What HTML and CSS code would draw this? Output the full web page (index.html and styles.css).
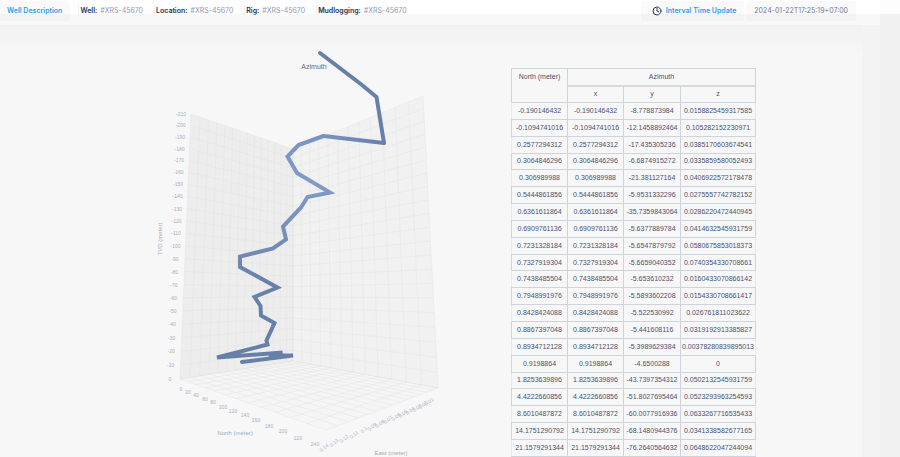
FILE: index.html
```html
<!DOCTYPE html>
<html lang="en">
<head>
<meta charset="utf-8">
<title>Well Description</title>
<link rel="stylesheet" href="styles.css">
</head>
<body>
<header class="topbar">
  <h1 class="chip title">Well Description</h1>
  <dl class="facts">
    <div class="fact"><dt>Well:</dt><dd>#XRS-45670</dd></div>
    <div class="fact"><dt>Location:</dt><dd>#XRS-45670</dd></div>
    <div class="fact"><dt>Rig:</dt><dd>#XRS-45670</dd></div>
    <div class="fact"><dt>Mudlogging:</dt><dd>#XRS-45670</dd></div>
  </dl>
  <div class="chip update">
    <svg class="clock" viewBox="0 0 10 10" aria-hidden="true"><circle cx="5" cy="5" r="4"/><path d="M5 2.4V5l1.8 1"/></svg>
    <span>Interval Time Update</span>
  </div>
  <time class="chip stamp">2024-01-22T17:25:19+07:00</time>
</header>
<div class="page">
<main class="content">
  <svg class="chart" viewBox="0 25 500 432" role="img" aria-label="Azimuth">
    <defs>
      <linearGradient id="across" gradientUnits="userSpaceOnUse" x1="384" y1="0" x2="323" y2="0"><stop offset="0" stop-color="#6680aa"/><stop offset="1" stop-color="#7894c0"/></linearGradient>
      <linearGradient id="down" gradientUnits="userSpaceOnUse" x1="0" y1="136" x2="0" y2="362"><stop offset="0" stop-color="#7894c0"/><stop offset=".2" stop-color="#7f9bc6"/><stop offset=".5" stop-color="#708bb7"/><stop offset=".65" stop-color="#6881ab"/><stop offset="1" stop-color="#6680aa"/></linearGradient>
    </defs>
    <polygon class="floor" points="180,379 293,361 438,388 326,430"/>
    <polygon class="wall-left" points="191,114 293,149 293,361 180,379"/>
    <polygon class="wall-right" points="293,149 423,96 438,388 293,361"/>
    <path class="grid" id="grid"/>
    <polyline class="well" stroke="#6680aa" points="320,53 362,85 376.5,97 384,143"/>
    <polyline class="well" stroke="url(#across)" points="384,143 323.5,136"/>
    <polyline class="well" stroke="url(#down)" points="323.5,136 298.5,145 287.5,156.5 297,173 330,192.5 307.5,197 301,207.5 283,226.5 286,239.5 273,248.5 240,256.5 240,267 277.5,287.5 254.5,297 260.5,306 261,315.5 274.5,323 266.5,340.5 267.5,344.5 217,357.5 282.5,352.5 269,355 293,355.5 242,362"/>
    <text class="name" x="314" y="69">Azimuth</text>
    <g class="ticks" id="ticks"></g>
    <text class="axis" transform="translate(162 239) rotate(-90)">TVD (meter)</text>
    <text class="axis" x="235" y="435">North (meter)</text>
    <text class="axis" x="391" y="455">East (meter)</text>
  </svg>
  <table class="readings">
    <colgroup><col class="c-north"><col class="c-x"><col class="c-y"><col class="c-z"></colgroup>
    <thead>
      <tr><th rowspan="2">North (meter)</th><th class="group" colspan="3">Azimuth</th></tr>
      <tr><th>x</th><th>y</th><th>z</th></tr>
    </thead>
    <tbody>
      <tr><td>-0.190146432</td><td>-0.190146432</td><td>-8.778873984</td><td>0.0158825459317585</td></tr>
      <tr><td>-0.1094741016</td><td>-0.1094741016</td><td>-12.1458892464</td><td>0.105282152230971</td></tr>
      <tr><td>0.2577294312</td><td>0.2577294312</td><td>-17.435305236</td><td>0.0385170603674541</td></tr>
      <tr><td>0.3064846296</td><td>0.3064846296</td><td>-6.6874915272</td><td>0.0335859580052493</td></tr>
      <tr><td>0.306989988</td><td>0.306989988</td><td>-21.381127164</td><td>0.0406922572178478</td></tr>
      <tr><td>0.5444861856</td><td>0.5444861856</td><td>-5.9531332296</td><td>0.0275557742782152</td></tr>
      <tr><td>0.6361611864</td><td>0.6361611864</td><td>-35.7359843064</td><td>0.0286220472440945</td></tr>
      <tr><td>0.6909761136</td><td>0.6909761136</td><td>-5.6377889784</td><td>0.0414632545931759</td></tr>
      <tr><td>0.7231328184</td><td>0.7231328184</td><td>-5.6547879792</td><td>0.0580675853018373</td></tr>
      <tr><td>0.7327919304</td><td>0.7327919304</td><td>-5.6659040352</td><td>0.0740354330708661</td></tr>
      <tr><td>0.7438485504</td><td>0.7438485504</td><td>-5.653610232</td><td>0.0160433070866142</td></tr>
      <tr><td>0.7948991976</td><td>0.7948991976</td><td>-5.5893602208</td><td>0.0154330708661417</td></tr>
      <tr><td>0.8428424088</td><td>0.8428424088</td><td>-5.522530992</td><td>0.026761811023622</td></tr>
      <tr><td>0.8867397048</td><td>0.8867397048</td><td>-5.441608116</td><td>0.0319192913385827</td></tr>
      <tr><td>0.8934712128</td><td>0.8934712128</td><td>-5.3989629384</td><td>0.00378280839895013</td></tr>
      <tr><td>0.9198864</td><td>0.9198864</td><td>-4.6500288</td><td>0</td></tr>
      <tr><td>1.8253639896</td><td>1.8253639896</td><td>-43.7397354312</td><td>0.0502132545931759</td></tr>
      <tr><td>4.4222660856</td><td>4.4222660856</td><td>-51.8027695464</td><td>0.0523293963254593</td></tr>
      <tr><td>8.6010487872</td><td>8.6010487872</td><td>-60.0077916936</td><td>0.0633267716535433</td></tr>
      <tr><td>14.1751290792</td><td>14.1751290792</td><td>-68.1480944376</td><td>0.0341338582677165</td></tr>
      <tr><td>21.1579291344</td><td>21.1579291344</td><td>-76.2640564632</td><td>0.0648622047244094</td></tr>
    </tbody>
  </table>
</main>
</div>
<script src="chart.js"></script>
</body>
</html>
```
FILE: styles.css
```css
* { box-sizing: border-box; }
body {
  margin: 0;
  min-height: 100vh;
  display: flex;
  flex-direction: column;
  background: #f1f1f1;
  font-family: Inter, "Liberation Sans", sans-serif;
  font-size: 7px;
  color: #4b5272;
  overflow: hidden;
}
.topbar {
  display: flex;
  align-items: flex-start;
  height: 25px;
  padding-right: 44px;
  background:
    linear-gradient(#fdfdfd, #fdfdfd) right top / 20px 14px no-repeat,
    linear-gradient(#f1f1f1, #f1f1f1) right top / 20px 25px no-repeat,
    linear-gradient(#fff 14px, #f8f8f8 14px);
}
.chip {
  display: flex;
  align-items: center;
  height: 20px;
  margin: 1px 0 0;
  border-radius: 3px;
  background: rgb(0 0 0 / 2%);
  font-size: 7px;
  line-height: 10px;
}
.title { padding: 0 8px 0 7px; color: #1da1f2; font-weight: 600; }
.facts { display: flex; flex: 1; margin: 4px 0 0 8px; }
.fact { display: flex; gap: 3px; height: 14px; padding: 0 11px 0 1px; border-left: 1px solid #f3f3f3; line-height: 14px; }
dt { color: #2b3150; font-weight: 600; }
dd { margin: 0; color: #9298b4; }
.update { gap: 4px; padding: 0 8px 0 11px; margin-right: 2px; color: #1da1f2; font-weight: 600; }
.clock { width: 10px; height: 10px; fill: none; stroke: #30364f; stroke-width: 1; stroke-linecap: round; stroke-linejoin: round; }
.stamp { padding: 0 8px; color: #737997; }

.page { flex: 1; padding-right: 20px; background: linear-gradient(90deg, #f3f3f3 calc(100% - 20px), #f1f1f1 calc(100% - 20px)); }
.content {
  display: flex;
  align-items: flex-start;
  gap: 11px;
  min-height: 100%;
  margin-right: 18px;
  padding-right: 106px;
  background: linear-gradient(#f1f1f1, #f7f7f7 30px);
}
.chart { flex: 1; min-width: 0; font-family: "Liberation Sans", Arial, sans-serif; }
.floor { fill: #f5f5f5; }
.wall-left { fill: #ededed; }
.wall-right { fill: #f1f1f1; }
.grid { fill: none; stroke: #e2e2e2; stroke-opacity: .4; stroke-width: 1; }
.well { fill: none; stroke-width: 4; stroke-linecap: round; stroke-linejoin: miter; }
.chart text { text-anchor: middle; }
.name { fill: #68686e; font-size: 7px; font-weight: 400; }
.axis { fill: #a5abc2; font-size: 6px; }
.ticks { fill: #a9aec2; font-size: 5px; }

.readings {
  width: 244px;
  height: 389px;
  margin-top: 43px;
  table-layout: fixed;
  border-collapse: collapse;
  border: 1px solid #cdd0da;
  font-family: "Liberation Sans", Arial, sans-serif;
  font-size: 7px;
  line-height: 8px;
  text-align: center;
}
.c-north, .c-x { width: 56px; }
.c-y { width: 57px; }
.c-z { width: 75px; }
th, td { padding: 0; border: 1px solid #cfd3de; font-weight: 400; white-space: nowrap; }
th { height: 17px; }
th[rowspan] { vertical-align: top; padding-top: 4px; }
.group { border-bottom: 2px solid #d5d9e0; }
tbody tr:nth-child(odd) td:first-child { border-left-color: #e5e7ed; }
tbody tr:nth-child(odd) td:last-child { border-right-color: #e5e7ed; }
```
FILE: chart.js
```js
// Maps the unit square onto a quad given as origin, u end, far corner, v end.
function plane([x0, y0], [x1, y1], [x2, y2], [x3, y3]) {
  const dx1 = x1 - x2, dx2 = x3 - x2, sx = x0 - x1 + x2 - x3;
  const dy1 = y1 - y2, dy2 = y3 - y2, sy = y0 - y1 + y2 - y3;
  const det = dx1 * dy2 - dx2 * dy1;
  const g = (sx * dy2 - dx2 * sy) / det;
  const h = (dx1 * sy - sx * dy1) / det;
  return (u, v) => {
    const w = g * u + h * v + 1;
    return [
      ((x1 - x0 + g * x1) * u + (x3 - x0 + h * x3) * v + x0) / w,
      ((y1 - y0 + g * y1) * u + (y3 - y0 + h * y3) * v + y0) / w
    ];
  };
}

function gridLines(map, columns, rows) {
  let d = "";
  for (let i = 0; i <= columns; i++) d += `M${map(i / columns, 0)}L${map(i / columns, 1)}`;
  for (let j = 0; j <= rows; j++) d += `M${map(0, j / rows)}L${map(1, j / rows)}`;
  return d;
}

const left = plane([180, 379], [293, 361], [293, 149], [191, 114]);
const right = plane([293, 361], [438, 388], [423, 96], [293, 149]);
const floor = plane([180, 379], [326, 430], [438, 388], [293, 361]);
document.getElementById("grid").setAttribute("d",
  gridLines(left, 14, 21) + gridLines(right, 12, 21) + gridLines(floor, 12, 14));

const ticks = document.getElementById("ticks");
function tick(label, x, y, angle) {
  const text = document.createElementNS("http://www.w3.org/2000/svg", "text");
  text.textContent = label;
  text.setAttribute("transform", `translate(${x} ${y}) rotate(${angle})`);
  ticks.append(text);
}

for (let i = 0; i <= 21; i++) {
  const [x, y] = left(0, i / 21);
  tick(i ? String(-10 * i) : "0", x - 10, y + 2, 0);
}

const north = [[181, 391], [188, 394], [196, 397], [205, 401], [213, 404], [223, 409], [233, 413],
  [245, 417], [256, 422], [269, 428], [283, 433], [298, 440], [315, 446]];
north.forEach(([x, y], i) => tick(String(i * 20), x, y, 0));

const east = [[325, 449], [335, 444], [345, 440], [355, 436], [365, 431], [373, 428], [381, 425],
  [389, 421], [397, 418], [404, 415], [411, 412], [418, 409], [424, 406], [430, 403]];
east.forEach(([x, y], i) => tick(String((14 - i) / 100), x, y, -38));
```
